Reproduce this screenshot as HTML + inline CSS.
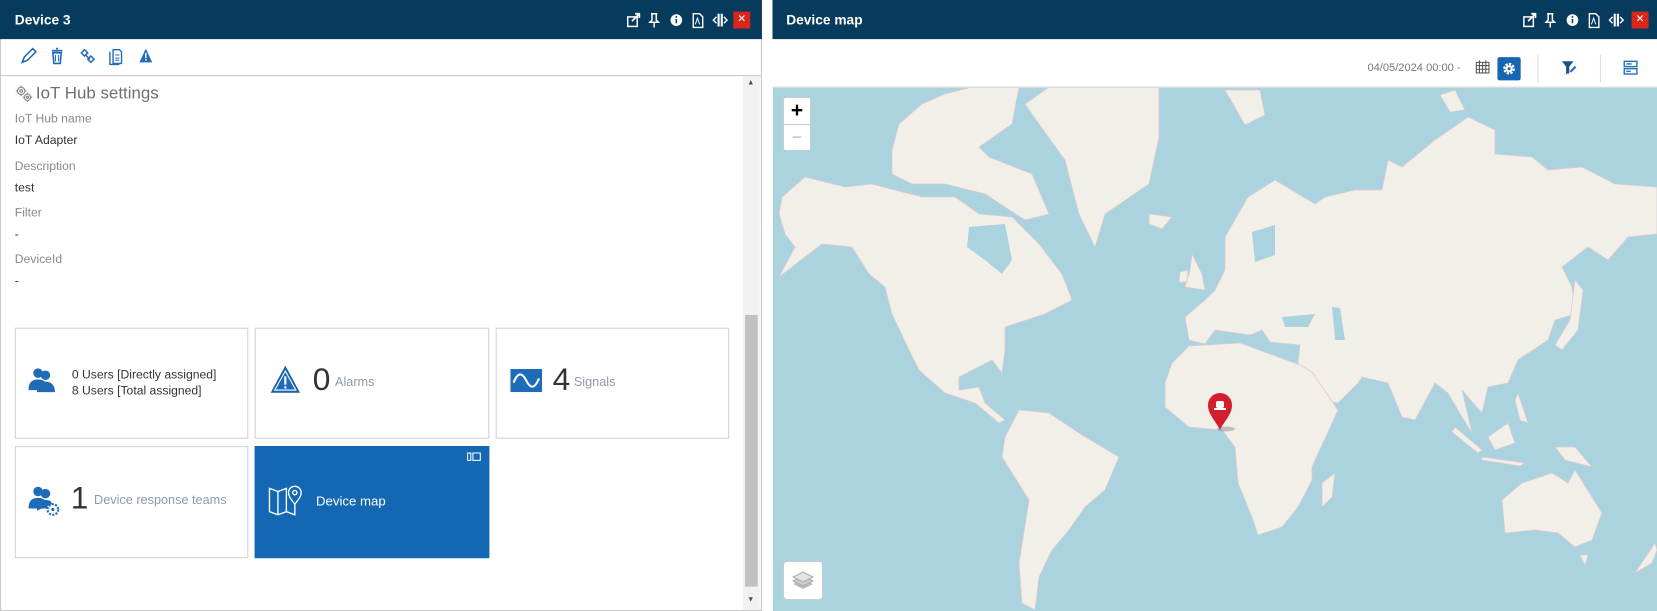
<!DOCTYPE html>
<html><head><meta charset="utf-8"><style>
*{margin:0;padding:0;box-sizing:border-box}
html,body{width:1657px;height:611px;overflow:hidden;background:#fff;font-family:"Liberation Sans",sans-serif}
#w{position:absolute;left:0;top:0;width:1568px;height:578px;transform:scale(1.05676,1.05709);transform-origin:0 0}
.a{position:absolute}
.hd{background:#073b5d;height:37px;color:#fff;font-weight:bold;font-size:13px}
.x{background:#d9261c;width:16px;height:16px;color:#fff;font-size:10px;text-align:center;line-height:16px;top:11px}
.lbl{position:absolute;left:14px;font-size:11.5px;color:#8a8a8a}
.val{position:absolute;left:14px;font-size:11.5px;color:#333}
.tile{position:absolute;border:1px solid #cfd3d6;background:#fff}
.big{font-size:30px;color:#333;font-weight:300}
.gl{font-size:12px;color:#8d9aa6}
</style></head><body><div id="w">
<div class="a" style="left:0;top:0;width:721px;height:578px;border-right:1px solid #c8c8c8;border-left:1px solid #c8c8c8;border-bottom:1px solid #c8c8c8"></div>
<div class="a hd" style="left:0;top:0;width:721px"><span class="a" style="left:14px;top:11px">Device 3</span></div>
<svg class="a" style="left:592px;top:11px" width="100" height="16" fill="#fff" stroke="#fff">
<rect x="2" y="5" width="9" height="9" fill="none" stroke-width="1.4"/><path d="M6 9 L13 2 M9 2h4v4" stroke-width="1.6" fill="none"/>
<path d="M24 2h6M25 2v6l-2 2h8l-2-2V2M27 10v5" stroke-width="1.4" fill="none"/>
<circle cx="48" cy="8" r="5.5" stroke="none"/><rect x="47.3" y="7" width="1.4" height="4" fill="#073b5d" stroke="none"/><circle cx="48" cy="5" r="0.9" fill="#073b5d" stroke="none"/>
<path d="M64 2h6l3 3v10h-9z" fill="none" stroke-width="1.3"/><path d="M66 12l2-6 2 6" fill="none" stroke-width="0.9"/>
<path d="M88 2v12M91 2v12" stroke-width="2"/><path d="M86 5l-3 3 3 3M93 5l3 3-3 3" fill="none" stroke-width="1.3"/>
</svg>
<div class="a x" style="left:694px">✕</div>
<div class="a" style="left:1px;top:71px;width:719px;height:1px;background:#c8c8c8"></div>
<svg class="a" style="left:18px;top:44px" width="135" height="18" fill="#1e6bb8" stroke="#1e6bb8">
<path d="M3 15l2-5 8-8 3 3-8 8z" fill="none" stroke-width="1.5"/>
<path d="M31 4h10M35 2h2" stroke-width="1.6"/><path d="M32 6h8l-1 10h-6z" fill="none" stroke-width="1.5"/><path d="M34.5 8v6M37.5 8v6" stroke-width="1"/>
<path d="M59 6l3-3 3 3-3 3zM65 12l3-3 3 3-3 3zM63 8l4 4" fill="none" stroke-width="1.4"/>
<path d="M89 3h6l2 2v11h-8z M86 5v12h9" fill="none" stroke-width="1.3"/><path d="M91 8h4M91 11h4M91 13h4" stroke-width="0.9"/>
<path d="M120 2l6 13h-12z" stroke="none"/><rect x="119.3" y="6" width="1.4" height="5" fill="#fff" stroke="none"/><rect x="119.3" y="12" width="1.4" height="1.4" fill="#fff" stroke="none"/>
</svg>
<svg class="a" style="left:14px;top:80px" width="18" height="18" fill="none" stroke="#888" stroke-width="1.1"><circle cx="6" cy="6" r="3.5"/><circle cx="6" cy="6" r="1.3"/><circle cx="12" cy="12" r="3"/><circle cx="12" cy="12" r="1"/><path d="M6 1v1.5M6 9.5V11M1 6h1.5M9.5 6H11M12 7.5v1M12 15.5v1M7.5 12h1M15.5 12h1"/></svg>
<div class="a" style="left:34px;top:80px;font-size:16px;color:#6f6f6f">IoT Hub settings</div>
<div class="lbl" style="top:107px">IoT Hub name</div><div class="val" style="top:127px">IoT Adapter</div>
<div class="lbl" style="top:152px">Description</div><div class="val" style="top:172px">test</div>
<div class="lbl" style="top:196px">Filter</div><div class="val" style="top:216px">-</div>
<div class="lbl" style="top:240px">DeviceId</div><div class="val" style="top:260px">-</div>
<div class="a" style="left:703px;top:72px;width:16px;height:505px;background:#f1f1f1"></div>
<div class="a" style="left:705px;top:298px;width:12px;height:257px;background:#c1c1c1"></div>
<div class="a" style="left:707px;top:75px;font-size:7px;color:#505050">▲</div>
<div class="a" style="left:707px;top:564px;font-size:7px;color:#505050">▼</div>
<div class="tile" style="left:14px;top:310px;width:221px;height:105px">
<svg class="a" style="left:11px;top:36px" width="28" height="26" fill="#1e6bb8"><circle cx="10" cy="6" r="4.5"/><path d="M1 22c0-8 4-10 9-10s9 2 9 10z"/><circle cx="17" cy="8" r="4.5"/><path d="M9 24c0-8 4-10 8-10s9 2 9 10z"/></svg>
<div class="a" style="left:53px;top:37px;font-size:11.5px;color:#333;line-height:15px">0 Users [Directly assigned]<br>8 Users [Total assigned]</div></div>
<div class="tile" style="left:241px;top:310px;width:222px;height:105px">
<svg class="a" style="left:13px;top:34px" width="30" height="28"><path d="M15 2L28 26H2z" fill="#1e6bb8" stroke="#1558a0"/><path d="M15 6L25 24H5z" fill="none" stroke="#fff" stroke-width="1"/><rect x="14" y="11" width="2" height="8" fill="#fff"/><rect x="14" y="20.5" width="2" height="2" fill="#fff"/></svg>
<span class="a big" style="left:54px;top:32px">0</span><span class="a gl" style="left:75px;top:43px">Alarms</span></div>
<div class="tile" style="left:469px;top:310px;width:221px;height:105px">
<svg class="a" style="left:13px;top:38px" width="30" height="22"><rect width="30" height="22" fill="#1e6bb8"/><path d="M3 13c4-10 8-10 12-2s8 8 12-2" stroke="#fff" stroke-width="2" fill="none"/></svg>
<span class="a big" style="left:53px;top:32px">4</span><span class="a gl" style="left:73px;top:43px">Signals</span></div>
<div class="tile" style="left:14px;top:422px;width:221px;height:106px">
<svg class="a" style="left:11px;top:36px" width="32" height="30" fill="#1e6bb8"><circle cx="10" cy="6" r="4.5"/><path d="M1 22c0-8 4-10 9-10s9 2 9 10z"/><circle cx="17" cy="8" r="4.5"/><path d="M9 24c0-8 4-10 8-10s6 1 6 4z"/><circle cx="24" cy="23" r="5" fill="none" stroke="#1e6bb8" stroke-width="2" stroke-dasharray="2 1.2"/><circle cx="24" cy="23" r="1.5"/></svg>
<span class="a big" style="left:52px;top:32px">1</span><span class="a gl" style="left:74px;top:43px">Device response teams</span></div>
<div class="tile" style="left:241px;top:422px;width:222px;height:106px;background:#1467b3;border-color:#1467b3">
<svg class="a" style="left:200px;top:5px" width="14" height="9" fill="none" stroke="#fff"><rect x="0.5" y="0.5" width="3" height="7"/><rect x="5.5" y="0.5" width="7" height="7"/></svg>
<svg class="a" style="left:12px;top:34px" width="32" height="32" fill="none" stroke="#fff" stroke-width="1.3"><path d="M1 5l8 3 8-3v22l-8 3-8-3z M9 8v22 M17 5v22l8 3V20"/><path d="M25 20c-3-4-6-7-6-11a6 6 0 0112 0c0 4-3 7-6 11z"/><circle cx="25" cy="9" r="2"/></svg>
<span class="a" style="left:57px;top:44px;color:#fff;font-size:12.5px">Device map</span></div>
<div class="a hd" style="left:731px;top:0;width:837px"><span class="a" style="left:13px;top:11px">Device map</span></div>
<svg class="a" style="left:1440px;top:11px" width="100" height="16" fill="#fff" stroke="#fff">
<rect x="2" y="5" width="9" height="9" fill="none" stroke-width="1.4"/><path d="M6 9 L13 2 M9 2h4v4" stroke-width="1.6" fill="none"/>
<path d="M24 2h6M25 2v6l-2 2h8l-2-2V2M27 10v5" stroke-width="1.4" fill="none"/>
<circle cx="48" cy="8" r="5.5" stroke="none"/><rect x="47.3" y="7" width="1.4" height="4" fill="#073b5d" stroke="none"/><circle cx="48" cy="5" r="0.9" fill="#073b5d" stroke="none"/>
<path d="M64 2h6l3 3v10h-9z" fill="none" stroke-width="1.3"/><path d="M66 12l2-6 2 6" fill="none" stroke-width="0.9"/>
<path d="M88 2v12M91 2v12" stroke-width="2"/><path d="M86 5l-3 3 3 3M93 5l3 3-3 3" fill="none" stroke-width="1.3"/>
</svg>
<div class="a x" style="left:1544px">✕</div>
<div class="a" style="left:1294px;top:58px;font-size:10.5px;color:#777">04/05/2024 00:00 -</div>
<svg class="a" style="left:1396px;top:57px" width="14" height="13" fill="none" stroke="#555" stroke-width="1"><rect x="1" y="2" width="12" height="10"/><path d="M1 5h12M1 8.5h12M4 2v10M7 2v10M10 2v10M4 0v2M10 0v2"/></svg>
<div class="a" style="left:1417px;top:54px;width:22px;height:22px;background:#1565b0;border-radius:2px"></div>
<svg class="a" style="left:1421px;top:58px" width="14" height="14"><circle cx="7" cy="7" r="4" fill="none" stroke="#fff" stroke-width="3" stroke-dasharray="2 1.1"/><circle cx="7" cy="7" r="3.3" fill="#fff"/><circle cx="7" cy="7" r="1.4" fill="#1565b0"/></svg>
<div class="a" style="left:1455px;top:52px;width:1px;height:26px;background:#ddd"></div>
<svg class="a" style="left:1477px;top:57px" width="16" height="14"><path d="M1 1h11l-4 5v6l-3 1V6z" fill="#1a4f8a"/><path d="M9 11l5-5" stroke="#1e6bb8" stroke-width="2"/><path d="M3 13h6" stroke="#888" stroke-width="0.8" stroke-dasharray="1 1"/></svg>
<div class="a" style="left:1514px;top:52px;width:1px;height:26px;background:#ddd"></div>
<svg class="a" style="left:1536px;top:57px" width="14" height="14" fill="none" stroke="#1e6bb8" stroke-width="1.3"><rect x="1" y="1" width="12" height="5"/><rect x="1" y="8" width="12" height="5"/><path d="M3 3.5h5M3 10.5h4"/></svg>
<div class="a" style="left:731px;top:82px;width:837px;height:1px;background:#ccc"></div>
</div>
<!-- map in original coords -->
<div class="a" style="left:773px;top:88px;width:884px;height:523px;background:#aad3df;overflow:hidden">
<svg class="a" style="left:0;top:0" width="884" height="523" viewBox="773 88 884 523" fill="#f2efe9" stroke="#d9cdd0" stroke-width="0.8">
<path d="M782 197L805 177 845 187 872 184 922 197 955 197 979 214 1012 217 1039 244 1062 274 1072 300 1045 314 1005 327 1005 350 1002 373 992 360 959 377 959 390 979 387 985 403 1005 420 999 423 975 403 945 393 919 370 909 350 892 314 885 287 869 274 852 247 822 244 792 267 779 277 795 247 785 234 779 214z"/>
<path d="M969 227L1005 224 1012 260 1002 274 985 260 967 247z" fill="#aad3df" stroke="none"/>
<path d="M892 150L899 124 922 104 945 94 972 87 1019 87 1012 124 979 147 989 157 1032 174 1049 214 1025 220 985 194 945 184 912 184 892 174z"/>
<path d="M1025 104L1049 87 1159 87 1159 137 1149 184 1105 214 1095 247 1079 214 1065 160 1039 124z"/>
<path d="M1149 214L1172 217 1162 229 1149 224z"/>
<path d="M1192 254L1202 274 1205 290 1185 287 1190 270z M1180 272L1188 270 1187 282 1179 282z"/>
<path d="M1185 317L1205 300 1215 290 1225 270 1225 237 1248 197 1275 180 1315 204 1325 197 1355 190 1382 190 1388 160 1402 167 1435 140 1468 117 1495 130 1495 154 1532 157 1548 170 1582 167 1615 184 1657 187 1657 234 1628 237 1608 260 1588 247 1562 267 1572 287 1575 314 1555 320 1548 340 1518 360 1508 383 1488 387 1482 413 1462 390 1472 433 1462 417 1448 393 1435 383 1415 420 1402 417 1388 383 1362 377 1358 383 1338 403 1318 400 1302 370 1298 363 1300 345 1270 342 1262 330 1250 335 1215 330 1205 344 1189 340z"/>
<path d="M1252 232L1275 225 1275 255 1255 262z M1282 317L1315 314 1308 327 1285 327z M1332 307L1340 308 1345 340 1335 340z" fill="#aad3df" stroke="none"/>
<path d="M1440 95L1455 90 1465 110 1450 112z M1225 90L1260 90 1265 115 1245 125z"/>
<path d="M1189 346L1240 343 1300 365 1312 372 1338 410 1312 467 1312 480 1298 507 1282 527 1258 535 1252 517 1238 483 1235 447 1222 430 1189 427 1165 407 1165 383 1172 363z"/>
<path d="M1322 483L1335 473 1332 497 1322 507z"/>
<path d="M1019 410L1049 413 1079 433 1119 457 1105 490 1085 507 1069 530 1052 550 1039 577 1035 610 1022 603 1019 563 1029 500 1002 457 1005 437z"/>
<path d="M1502 500L1522 483 1552 473 1568 483 1575 470 1602 513 1592 540 1575 547 1558 533 1535 530 1505 533z M1580 555L1588 555 1585 565z"/>
<path d="M1455 427L1482 450 1478 453 1452 432z M1488 437L1508 423 1515 443 1495 450z M1555 447L1575 447 1592 467 1565 460z M1482 457L1525 463 1520 466 1482 460z M1518 393L1528 423 1520 420 1515 400z"/>
<path d="M1575 280L1583 290 1578 330 1562 350 1555 345 1570 320z"/>
<path d="M1635 573L1655 543 1657 550 1652 563z"/>
</svg>
<svg class="a" style="left:433px;top:304px" width="32" height="40"><ellipse cx="20" cy="37" rx="9" ry="2.5" fill="rgba(0,0,0,.2)"/><path d="M14 38C10 29 2 23 2 13a12 12 0 0124 0c0 10-8 16-12 25z" fill="#d21f2b"/><rect x="10" y="9" width="8" height="7" rx="2" fill="#fff"/><rect x="8" y="16" width="12" height="2" fill="#fff"/></svg>
<div class="a" style="left:10px;top:9px;width:28px;height:54px;background:#fff;border:1px solid #ccc;border-radius:3px"></div>
<div class="a" style="left:10px;top:9px;width:28px;height:27px;text-align:center;font-size:21px;font-weight:bold;line-height:27px;color:#000">+</div>
<div class="a" style="left:11px;top:36px;width:26px;height:1px;background:#ccc"></div>
<div class="a" style="left:10px;top:36px;width:28px;height:27px;text-align:center;font-size:18px;line-height:27px;color:#bbb">−</div>
<div class="a" style="left:10px;top:473px;width:40px;height:39px;background:#fff;border:1px solid #ccc;border-radius:4px"></div>
<svg class="a" style="left:18px;top:481px" width="24" height="24"><path d="M12 10l10 5-10 5-10-5z" fill="#bbb"/><path d="M12 7l10 5-10 5-10-5z" fill="#ccc" stroke="#aaa"/><path d="M12 3l10 5-10 5-10-5z" fill="#e4e4e4" stroke="#aaa"/></svg>
</div>
</body></html>
